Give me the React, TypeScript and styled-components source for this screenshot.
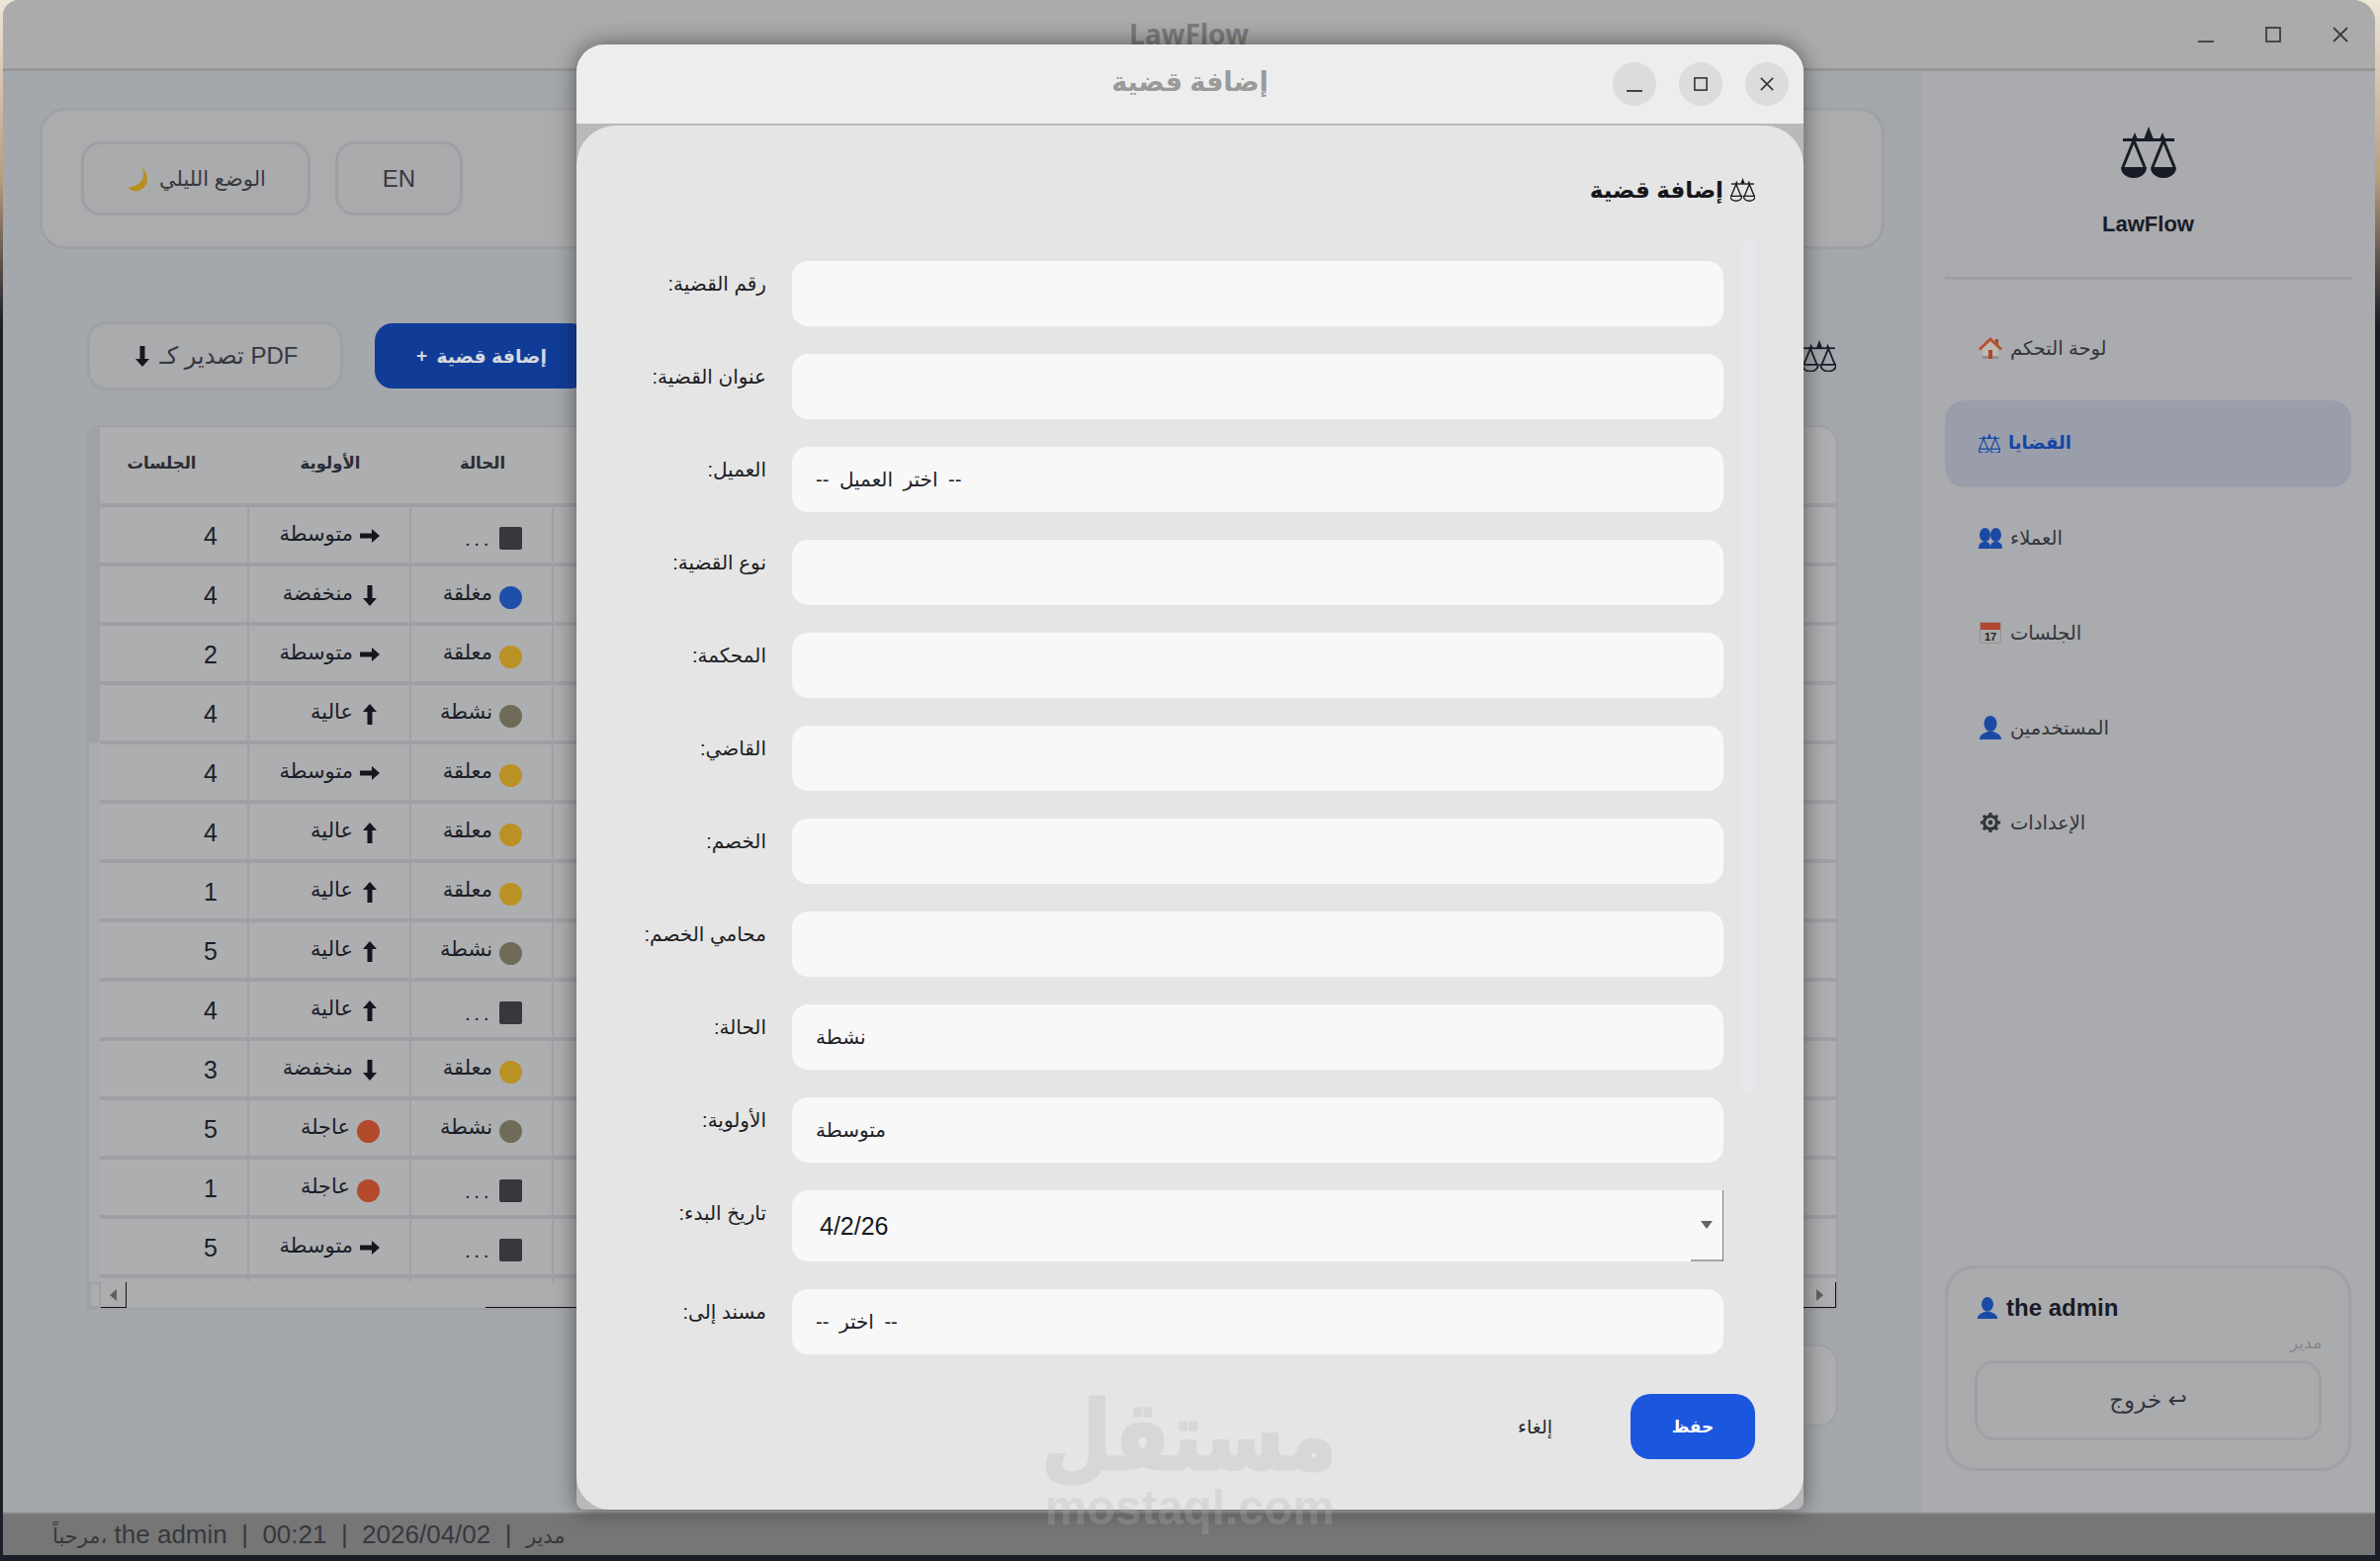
import { styled, createGlobalStyle } from "styled-components";

// Types
type Status = "closed" | "pending" | "active" | "unknown";
type Priority = "medium" | "low" | "high" | "urgent";

type CaseRow = {
  id: string;
  status: Status;
  priority: Priority;
  sessions: number;
};

// Data
const cases: CaseRow[] = [
  { id: "2025-001", status: "unknown", priority: "medium", sessions: 4 },
  { id: "2025-002", status: "closed", priority: "low", sessions: 4 },
  { id: "2025-003", status: "pending", priority: "medium", sessions: 2 },
  { id: "2025-004", status: "active", priority: "high", sessions: 4 },
  { id: "2025-009", status: "pending", priority: "medium", sessions: 4 },
  { id: "2025-005", status: "pending", priority: "high", sessions: 4 },
  { id: "2025-007", status: "pending", priority: "high", sessions: 1 },
  { id: "2025-003", status: "active", priority: "high", sessions: 5 },
  { id: "2025-010", status: "unknown", priority: "high", sessions: 4 },
  { id: "2025-006", status: "pending", priority: "low", sessions: 3 },
  { id: "2025-008", status: "active", priority: "urgent", sessions: 5 },
  { id: "2025-011", status: "unknown", priority: "urgent", sessions: 1 },
  { id: "2025-012", status: "unknown", priority: "medium", sessions: 5 },
];

const statusInfo: Record<Status, { label: string; color: string }> = {
  closed: { label: "مغلقة", color: "#1d4fa8" },
  pending: { label: "معلقة", color: "#ba9124" },
  active: { label: "نشطة", color: "#6e6c58" },
  unknown: { label: "...", color: "#37383d" },
};

const priorityLabel: Record<Priority, string> = {
  medium: "متوسطة",
  low: "منخفضة",
  high: "عالية",
  urgent: "عاجلة",
};

const formFields = [
  { label: "رقم القضية:", value: "" },
  { label: "عنوان القضية:", value: "" },
  { label: "العميل:", value: "-- اختر العميل --" },
  { label: "نوع القضية:", value: "" },
  { label: "المحكمة:", value: "" },
  { label: "القاضي:", value: "" },
  { label: "الخصم:", value: "" },
  { label: "محامي الخصم:", value: "" },
  { label: "الحالة:", value: "نشطة" },
  { label: "الأولوية:", value: "متوسطة" },
];

const fontStack = `"Liberation Sans", "DejaVu Sans", sans-serif`;

const GlobalStyle = createGlobalStyle`
  html, body {
    margin: 0;
    height: 1579px;
    overflow: hidden;
  }
  body {
    font-family: ${fontStack};
    background: linear-gradient(to bottom, #efe6d8 0, #b89c7e 180px, #1b1d27 330px);
  }
  * {
    box-sizing: border-box;
  }
`;

// Styled Components: main window
const AppWindow = styled.div`
  position: relative;
  margin-left: 3px;
  width: 2399px;
  height: 1573px;
  display: flex;
  flex-direction: column;
  border-radius: 16px 22px 0 0;
  overflow: hidden;
  background: #a4a7ac;
`;

const TitleBar = styled.header`
  flex: none;
  height: 72px;
  display: grid;
  grid-template-columns: 1fr auto 1fr;
  background: #ababab;
  border-bottom: 3px solid #969696;
`;

const AppTitle = styled.div`
  grid-column: 2;
  padding-top: 15px;
  font-family: "Noto Sans", sans-serif;
  font-size: 28px;
  line-height: 38px;
  font-weight: 700;
  color: #7a7a7a;
`;

const WindowControls = styled.div`
  grid-column: 3;
  justify-self: end;
  display: flex;
  padding-right: 1px;
`;

const WindowControl = styled.div`
  width: 68px;
  height: 69px;
  display: flex;
  align-items: center;
  justify-content: center;
  color: #3d3d3d;
`;

const Workspace = styled.div`
  flex: 1;
  min-height: 0;
  display: flex;
`;

const MainArea = styled.main`
  flex: 1;
  min-width: 0;
  padding: 37px 37px 0;
  background: #a4a7ac;
`;

const TopCard = styled.section`
  height: 143px;
  display: flex;
  align-items: center;
  gap: 25px;
  padding-left: 39px;
  background: #abacae;
  border: 3px solid #9fa0a3;
  border-radius: 26px;
`;

const GhostButton = styled.div<{ $width: number; $height: number }>`
  width: ${(p) => p.$width}px;
  height: ${(p) => p.$height}px;
  display: flex;
  align-items: center;
  justify-content: center;
  gap: 8px;
  background: #aaabad;
  border: 3px solid #9fa0a3;
  border-radius: 20px;
  font-size: 24px;
  color: #363840;
`;

const ThemeText = styled.span`
  font-size: 21px;
`;

const Toolbar = styled.div`
  height: 70px;
  margin: 73px 49px 35px 48px;
  display: flex;
  align-items: center;
  justify-content: space-between;
`;

const ToolbarGroup = styled.div`
  display: flex;
  align-items: center;
  gap: 32px;
`;

const PdfLabel = styled.span`
  direction: ltr;
  font-size: 24px;
`;

const AddButton = styled.div`
  width: 216px;
  height: 66px;
  display: flex;
  align-items: center;
  justify-content: center;
  gap: 9px;
  background: #103c98;
  border-radius: 18px;
  color: #d5d8de;
  font-size: 19px;
  font-weight: 700;
`;

const PageIcon = styled.div`
  color: #1b1d28;
  display: flex;
`;

const TableFrame = styled.section`
  margin: 0 47px 0 48px;
  border: 2px solid #a0a1a4;
  border-top-right-radius: 20px;
  border-top-left-radius: 10px;
  overflow: hidden;
  background: #acadaf;
`;

const TableBody = styled.div`
  display: flex;
  height: 865px;
`;

const VerticalTrack = styled.div`
  flex: none;
  width: 11px;
  background: #a9abae;
`;

const VerticalThumb = styled.div`
  height: 320px;
  background: #a0a1a4;
  border-radius: 0 0 7px 7px;
`;

const TableGrid = styled.div`
  flex: 1;
  min-width: 0;
`;

const TableRow = styled.div<{ $head?: boolean }>`
  height: ${(p) => (p.$head ? 81 : 60)}px;
  display: grid;
  grid-template-columns: 151px 164px 144px 1fr 102px;
  border-bottom: 4px solid #9fa0a3;
  background: #adaeb0;
`;

const Stub = styled.div`
  height: 4px;
  display: grid;
  grid-template-columns: 151px 164px 144px 1fr 102px;
`;

const HeadCell = styled.div<{ $shift?: number }>`
  display: flex;
  align-items: center;
  justify-content: center;
  padding-right: ${(p) => p.$shift ?? 0}px;
  padding-bottom: 4px;
  font-size: 16.5px;
  font-weight: 700;
  color: #2a2c34;
`;

const Cell = styled.div`
  direction: rtl;
  display: flex;
  align-items: center;
  gap: 7px;
  padding: 0 30px 0 0;
  border-right: 2px solid #a0a1a4;
  font-size: 21px;
  color: #1b1d28;
`;

const StubCell = styled.div`
  border-right: 2px solid #a0a1a4;
`;

const Count = styled.span`
  font-size: 25px;
`;

const IdCell = styled.div`
  display: flex;
  align-items: center;
  justify-content: flex-end;
  padding-right: 30px;
  font-size: 25px;
  color: #1b1d38;
`;

const StatusMark = styled.i<{ $color: string; $square?: boolean }>`
  flex: none;
  width: 23px;
  height: 23px;
  margin-top: 5px;
  background: ${(p) => p.$color};
  border-radius: ${(p) => (p.$square ? "2px" : "50%")};
`;

const CellText = styled.span<{ $dots?: boolean }>`
  margin-top: ${(p) => (p.$dots ? 6 : -4)}px;
  letter-spacing: ${(p) => (p.$dots ? "3.5px" : "normal")};
`;

const ScrollRow = styled.div`
  height: 26px;
  display: flex;
`;

const ScrollCorner = styled.div`
  flex: none;
  width: 12px;
  border: 2px solid #a0a1a4;
`;

const ScrollButton = styled.div<{ $width: number }>`
  flex: none;
  width: ${(p) => p.$width}px;
  display: flex;
  align-items: center;
  justify-content: center;
  border-right: 1px solid #111;
  border-bottom: 1px solid #111;
`;

const ArrowLeft = styled.i`
  border-style: solid;
  border-width: 6px 7px 6px 0;
  border-color: transparent #5f5f5f transparent transparent;
`;

const ArrowRight = styled.i`
  border-style: solid;
  border-width: 6px 0 6px 7px;
  border-color: transparent transparent transparent #5f5f5f;
`;

const ScrollGap = styled.div`
  flex: none;
  width: 363px;
`;

const ScrollThumb = styled.div`
  flex: 1;
  border-bottom: 1px solid #111;
`;

const PagerCard = styled.div`
  width: 400px;
  height: 83px;
  margin: 35px 47px 0 auto;
  background: #acadaf;
  border: 2px solid #a0a1a4;
  border-radius: 20px;
`;

// Styled Components: sidebar
const Sidebar = styled.aside`
  flex: none;
  width: 459px;
  display: flex;
  flex-direction: column;
  padding: 56px 24px 42px;
  background: #aaabae;
`;

const Brand = styled.div`
  display: flex;
  flex-direction: column;
  align-items: center;
  height: 155px;
  color: #191b26;
  border-bottom: 3px solid #9fa0a3;
`;

const BrandName = styled.div`
  margin-top: 34px;
  font-size: 22px;
  font-weight: 700;
`;

const NavList = styled.nav`
  display: flex;
  flex-direction: column;
  gap: 8px;
  margin-top: 26px;
`;

const NavItem = styled.div<{ $active?: boolean }>`
  direction: rtl;
  height: 88px;
  display: flex;
  align-items: center;
  justify-content: flex-end;
  gap: 8px;
  padding: 0 0 2px 34px;
  border-radius: 20px;
  background: ${(p) => (p.$active ? "#9a9eab" : "transparent")};
  color: ${(p) => (p.$active ? "#1446a6" : "#33353d")};
  font-size: ${(p) => (p.$active ? 18 : 19.5)}px;
  font-weight: ${(p) => (p.$active ? 700 : 400)};
`;

const UserCard = styled.div`
  margin-top: auto;
  height: 208px;
  padding: 23px 27px 28px;
  display: flex;
  flex-direction: column;
  background: #aaabad;
  border: 3px solid #a0a1a4;
  border-radius: 30px;
`;

const UserName = styled.div`
  display: flex;
  align-items: center;
  gap: 8px;
  height: 34px;
  padding-left: 2px;
  font-size: 24px;
  font-weight: 700;
  color: #191b26;
`;

const UserRole = styled.div`
  direction: rtl;
  margin-top: 8px;
  height: 28px;
  font-size: 17px;
  color: #85878a;
`;

const LogoutButton = styled.div`
  direction: rtl;
  flex: 1;
  display: flex;
  align-items: center;
  justify-content: center;
  border: 3px solid #a0a1a4;
  border-radius: 20px;
  font-size: 23px;
  color: #33353d;
`;

const StatusBar = styled.footer`
  flex: none;
  height: 43px;
  display: flex;
  align-items: center;
  padding-left: 50px;
  background: #767676;
  border-top: 2px solid #858585;
  font-size: 26px;
  color: #37383e;
`;

const StatusLine = styled.div`
  direction: ltr;
  white-space: pre;
`;

const StatusArabic = styled.span`
  font-size: 21px;
`;

// Styled Components: dialog
const Dialog = styled.div`
  position: absolute;
  left: 583px;
  top: 45px;
  width: 1241px;
  height: 1482px;
  display: flex;
  flex-direction: column;
  border-radius: 28px 28px 8px 8px;
  background: #b9b9b9;
  box-shadow: 0 0 22px rgba(20, 20, 20, 0.55);
`;

const DialogBar = styled.header`
  flex: none;
  position: relative;
  height: 80px;
  display: flex;
  align-items: center;
  justify-content: flex-end;
  gap: 23px;
  padding-right: 15px;
  background: #ededed;
  border-radius: 28px 28px 0 0;
`;

const DialogTitle = styled.div`
  position: absolute;
  left: 0;
  right: 0;
  top: 22px;
  text-align: center;
  font-size: 27px;
  font-weight: 700;
  color: #9a9a9a;
`;

const RoundControl = styled.div`
  width: 44px;
  height: 44px;
  display: flex;
  align-items: center;
  justify-content: center;
  border-radius: 50%;
  background: #dcdcdc;
  color: #333;
`;

const DialogBody = styled.div`
  flex: 1;
  position: relative;
  margin-top: 2px;
  padding: 48px 49px 50px 37px;
  display: flex;
  flex-direction: column;
  background: #e5e5e5;
  border-radius: 40px 40px 34px 34px;
`;

const Heading = styled.div`
  direction: rtl;
  height: 34px;
  display: flex;
  align-items: center;
  gap: 7px;
  font-size: 23px;
  font-weight: 700;
  color: #15161c;
`;

const FormGrid = styled.div`
  margin-top: 55px;
  padding-right: 32px;
  display: flex;
  flex-direction: column;
  gap: 28px;
`;

const FormRow = styled.label`
  display: grid;
  grid-template-columns: 155px 1fr;
  column-gap: 26px;
`;

const FieldLabel = styled.span`
  direction: rtl;
  padding-top: 8px;
  font-size: 20px;
  line-height: 30px;
  color: #1d1e24;
  white-space: nowrap;
`;

const FieldBox = styled.input`
  width: 100%;
  height: 66px;
  padding: 0 24px;
  border: 0;
  outline: 0;
  border-radius: 16px;
  background: #f8f8f8;
  font-family: ${fontStack};
  font-size: 20px;
  word-spacing: 5px;
  color: #202127;
`;

const DateBox = styled.div`
  height: 72px;
  display: flex;
  align-items: center;
  justify-content: space-between;
  padding-left: 28px;
  background: #f8f8f8;
  border-radius: 16px 0 0 16px;
  border-right: 1px solid #7d7d7d;
  font-size: 25px;
  color: #17181d;
`;

const DateArrow = styled.div`
  align-self: stretch;
  width: 32px;
  display: flex;
  align-items: center;
  justify-content: center;
  border-bottom: 2px solid #a5a5a5;
`;

const CaretDown = styled.i`
  border-style: solid;
  border-width: 8px 6px 0;
  border-color: #666 transparent transparent;
`;

const FormScrollbar = styled.div`
  position: absolute;
  right: 49px;
  top: 117px;
  width: 13px;
  height: 862px;
  background: #e8e8ec;
  border-radius: 4px;
`;

const DialogFooter = styled.div`
  margin-top: 40px;
  display: flex;
  justify-content: flex-end;
  gap: 32px;
`;

const CancelButton = styled.div`
  width: 129px;
  height: 66px;
  display: flex;
  align-items: center;
  justify-content: center;
  border: 2px solid #e7e7e7;
  border-radius: 20px;
  font-size: 19px;
  color: #25262c;
`;

const SaveButton = styled.div`
  width: 126px;
  height: 66px;
  display: flex;
  align-items: center;
  justify-content: center;
  border-radius: 20px;
  background: #1b56de;
  font-size: 17px;
  font-weight: 700;
  color: #fff;
`;

const Watermark = styled.div`
  position: absolute;
  left: 1058px;
  top: 1399px;
  width: 290px;
  display: flex;
  flex-direction: column;
  align-items: center;
  color: #b4b4b4;
  opacity: 0.27;
  font-weight: 700;
  pointer-events: none;
`;

const WatermarkArabic = styled.div`
  font-family: "DejaVu Sans", sans-serif;
  font-size: 96px;
  line-height: 108px;
  -webkit-text-stroke: 3px #b4b4b4;
  transform: scaleX(0.85);
`;

const WatermarkLatin = styled.div`
  font-family: "Liberation Sans", sans-serif;
  font-size: 50px;
  line-height: 36px;
  transform: scaleX(0.95);
`;

// Icons
function Scales({ size, solid = true }: { size: number; solid?: boolean }) {
  return (
    <svg width={size} height={size * 0.93} viewBox="0 0 56 52" fill="none">
      <path d="M2 13.5H54" stroke="currentColor" strokeWidth="3" />
      <path d="M28 0l5 13H23zM14 6l3 7h-6zM42 6l3 7h-6z" fill="currentColor" />
      <path
        d="M13 14L2 41M13 14l11 27M43 14L32 41M43 14l11 27"
        stroke="currentColor"
        strokeWidth="3"
      />
      <path
        d="M0 41h26c0 7-6 11-13 11S0 48 0 41zM30 41h26c0 7-6 11-13 11s-13-4-13-11z"
        fill={solid ? "currentColor" : "none"}
        stroke="currentColor"
        strokeWidth={solid ? 0 : 3}
      />
    </svg>
  );
}

function Moon() {
  return (
    <svg width="26" height="26" viewBox="0 0 24 24">
      <path d="M14 1c6 7 2 18-12 19 3 3 7 4 10 3 9-2 12-15 2-22z" fill="#b9901f" />
    </svg>
  );
}

function ArrowGlyph({ dir }: { dir: Priority }) {
  if (dir === "urgent") return <StatusMark $color="#b34a2c" />;
  if (dir === "medium") {
    return (
      <svg width="20" height="14" viewBox="0 0 20 14" style={{ flex: "none" }}>
        <path d="M0 4.5h12V0l8 7-8 7V9.5H0z" fill="#15161f" />
      </svg>
    );
  }
  return (
    <svg
      width="20"
      height="21"
      viewBox="-3 0 20 21"
      style={{ flex: "none", transform: dir === "low" ? "rotate(180deg)" : undefined }}
    >
      <path d="M7 0l7 8H9.5v13h-5V8H0z" fill="#15161f" />
    </svg>
  );
}

function HomeIcon() {
  return (
    <svg width="24" height="24" viewBox="0 0 24 24">
      <path d="M4 10l8-7 8 7v13H4z" fill="#bdb9b0" />
      <path d="M4 20h16v3H4z" fill="#8e8e8c" />
      <path d="M10 14h4v9h-4z" fill="#b2442b" />
      <path d="M0 12.5L12 1l12 11.5-2 2L12 5 2 14.500z" fill="#b9502f" />
      <path d="M17 3h3v6l-3-3z" fill="#a8452b" />
    </svg>
  );
}

function PeopleIcon() {
  return (
    <svg width="24" height="24" viewBox="0 0 24 24" fill="#1a4aa6">
      <ellipse cx="6.5" cy="9" rx="5.500" ry="7" />
      <ellipse cx="17.5" cy="9" rx="5.500" ry="7" />
      <path d="M0 23c0-5 2-7 6.500-7s5.500 2 5.500 7zM12 23c0-5 1-7 5.500-7s6.500 2 6.500 7z" />
    </svg>
  );
}

function CalendarIcon() {
  return (
    <svg width="22" height="22" viewBox="0 0 22 22" style={{ margin: "0 1px" }}>
      <rect x="0.5" y="0.5" width="21" height="21" rx="1.5" fill="#a9a9a9" stroke="#939393" />
      <path d="M1 1h20v7H1z" fill="#b2472f" />
      <text x="11" y="19" textAnchor="middle" fontSize="11" fontWeight="700" fill="#1e1f25" fontFamily="Liberation Sans">
        17
      </text>
    </svg>
  );
}

function PersonIcon({ size = 24 }: { size?: number }) {
  return (
    <svg width={size} height={size} viewBox="0 0 24 24" fill="#1a4aa6" style={{ flex: "none" }}>
      <ellipse cx="12" cy="8" rx="6.500" ry="8" />
      <path d="M1 24c0-5 4-6 8-8h6c4 2 8 3 8 8z" />
    </svg>
  );
}

function GearIcon() {
  return (
    <svg width="22" height="22" viewBox="0 0 24 24" style={{ margin: "0 1px" }}>
      <circle cx="12" cy="12" r="7" fill="none" stroke="#33353d" strokeWidth="3.4" />
      <circle cx="12" cy="12" r="2.6" fill="#33353d" />
      <path
        d="M12 1v4M12 19v4M1 12h4M19 12h4M4.200 4.200l2.800 2.800M17 17l2.800 2.800M4.200 19.800L7 17M17 7l2.800-2.800"
        stroke="#33353d"
        strokeWidth="3.4"
      />
    </svg>
  );
}

function MinGlyph({ size }: { size: number }) {
  return (
    <svg width={size} height={size} viewBox="0 0 16 16">
      <path d="M0 15h16" stroke="currentColor" strokeWidth="1.8" />
    </svg>
  );
}

function MaxGlyph({ size }: { size: number }) {
  return (
    <svg width={size} height={size} viewBox="0 0 16 16" fill="none">
      <rect x="1" y="1" width="14" height="14" stroke="currentColor" strokeWidth="1.8" />
    </svg>
  );
}

function CloseGlyph({ size }: { size: number }) {
  return (
    <svg width={size} height={size} viewBox="0 0 16 16">
      <path d="M1 1l14 14M15 1L1 15" stroke="currentColor" strokeWidth="1.8" />
    </svg>
  );
}

function App() {
  return (
    <>
      <GlobalStyle />
      <AppWindow>
        <TitleBar>
          <AppTitle>LawFlow</AppTitle>
          <WindowControls>
            <WindowControl><MinGlyph size={16} /></WindowControl>
            <WindowControl><MaxGlyph size={16} /></WindowControl>
            <WindowControl><CloseGlyph size={16} /></WindowControl>
          </WindowControls>
        </TitleBar>

        <Workspace>
          <MainArea>
            <TopCard>
              <GhostButton $width={232} $height={75}>
                <Moon />
                <ThemeText>الوضع الليلي</ThemeText>
              </GhostButton>
              <GhostButton $width={129} $height={75}>EN</GhostButton>
            </TopCard>

            <Toolbar>
              <ToolbarGroup>
                <GhostButton $width={259} $height={70}>
                  <ArrowGlyph dir="low" />
                  <PdfLabel>تصدير كـ PDF</PdfLabel>
                </GhostButton>
                <AddButton>
                  <span>+</span>
                  <span>إضافة قضية</span>
                </AddButton>
              </ToolbarGroup>
              <PageIcon><Scales size={34} solid={false} /></PageIcon>
            </Toolbar>

            <TableFrame>
              <TableBody>
                <VerticalTrack><VerticalThumb /></VerticalTrack>
                <TableGrid>
                  <TableRow $head>
                    <HeadCell $shift={26}>الجلسات</HeadCell>
                    <HeadCell>الأولوية</HeadCell>
                    <HeadCell>الحالة</HeadCell>
                    <HeadCell />
                    <HeadCell />
                  </TableRow>
                  {cases.map((row, idx) => (
                    <TableRow key={idx}>
                      <Cell><Count>{row.sessions}</Count></Cell>
                      <Cell>
                        <ArrowGlyph dir={row.priority} />
                        <CellText>{priorityLabel[row.priority]}</CellText>
                      </Cell>
                      <Cell>
                        <StatusMark
                          $color={statusInfo[row.status].color}
                          $square={row.status === "unknown"}
                        />
                        <CellText $dots={row.status === "unknown"}>
                          {statusInfo[row.status].label}
                        </CellText>
                      </Cell>
                      <Cell />
                      <IdCell>{row.id}</IdCell>
                    </TableRow>
                  ))}
                  <Stub>
                    <StubCell />
                    <StubCell />
                    <StubCell />
                  </Stub>
                </TableGrid>
              </TableBody>
              <ScrollRow>
                <ScrollCorner />
                <ScrollButton $width={26}><ArrowLeft /></ScrollButton>
                <ScrollGap />
                <ScrollThumb />
                <ScrollButton $width={32}><ArrowRight /></ScrollButton>
              </ScrollRow>
            </TableFrame>

            <PagerCard />
          </MainArea>

          <Sidebar>
            <Brand>
              <Scales size={56} />
              <BrandName>LawFlow</BrandName>
            </Brand>
            <NavList>
              <NavItem><span>لوحة التحكم</span><HomeIcon /></NavItem>
              <NavItem $active><span>القضايا</span><Scales size={22} solid={false} /></NavItem>
              <NavItem><span>العملاء</span><PeopleIcon /></NavItem>
              <NavItem><span>الجلسات</span><CalendarIcon /></NavItem>
              <NavItem><span>المستخدمين</span><PersonIcon /></NavItem>
              <NavItem><span>الإعدادات</span><GearIcon /></NavItem>
            </NavList>
            <UserCard>
              <UserName><PersonIcon size={22} />the admin</UserName>
              <UserRole>مدير</UserRole>
              <LogoutButton>↩ خروج</LogoutButton>
            </UserCard>
          </Sidebar>
        </Workspace>

        <StatusBar>
          <StatusLine>
            <StatusArabic>مرحباً،</StatusArabic> the admin  |  00:21  |  2026/04/02  |  <StatusArabic>مدير</StatusArabic>
          </StatusLine>
        </StatusBar>
      </AppWindow>

      <Dialog>
        <DialogBar>
          <DialogTitle>إضافة قضية</DialogTitle>
          <RoundControl><MinGlyph size={16} /></RoundControl>
          <RoundControl><MaxGlyph size={14} /></RoundControl>
          <RoundControl><CloseGlyph size={14} /></RoundControl>
        </DialogBar>
        <DialogBody>
          <Heading>
            <Scales size={25} solid={false} />
            <span>إضافة قضية</span>
          </Heading>
          <FormGrid>
            {formFields.map((field) => (
              <FormRow key={field.label}>
                <FieldLabel>{field.label}</FieldLabel>
                <FieldBox readOnly value={field.value} />
              </FormRow>
            ))}
            <FormRow>
              <FieldLabel>تاريخ البدء:</FieldLabel>
              <DateBox>
                <span>4/2/26</span>
                <DateArrow><CaretDown /></DateArrow>
              </DateBox>
            </FormRow>
            <FormRow>
              <FieldLabel>مسند إلى:</FieldLabel>
              <FieldBox readOnly value="-- اختر --" />
            </FormRow>
          </FormGrid>
          <FormScrollbar />
          <DialogFooter>
            <CancelButton>إلغاء</CancelButton>
            <SaveButton>حفظ</SaveButton>
          </DialogFooter>
        </DialogBody>
      </Dialog>

      <Watermark>
        <WatermarkArabic>مستقل</WatermarkArabic>
        <WatermarkLatin>mostaql.com</WatermarkLatin>
      </Watermark>
    </>
  );
}

export default App;
